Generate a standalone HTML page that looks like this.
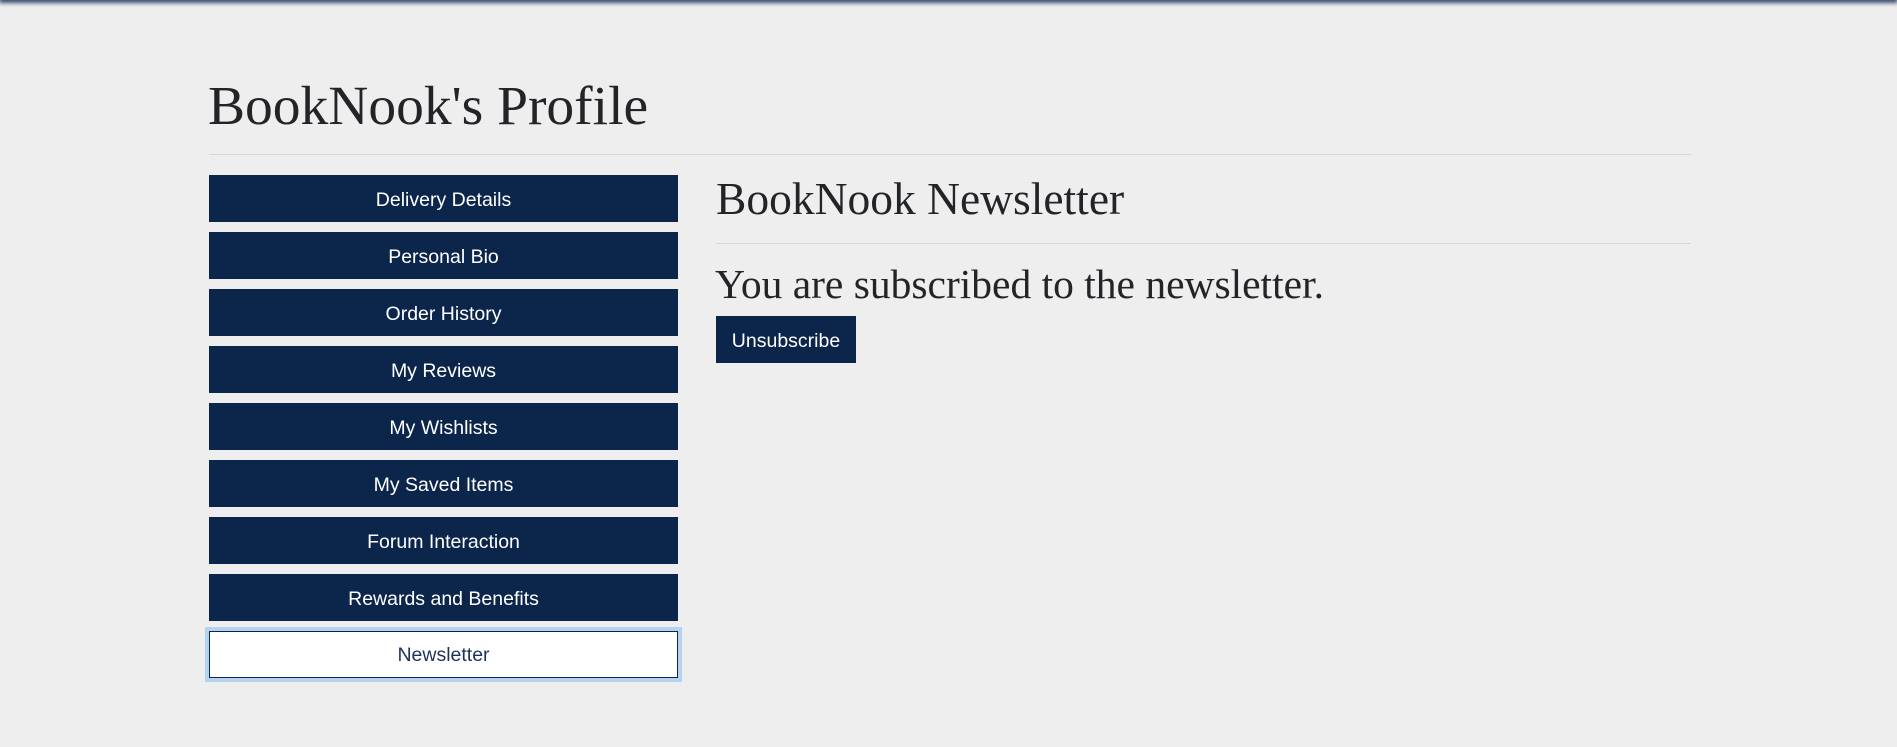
<!DOCTYPE html>
<html><head><meta charset="utf-8"><style>
html,body{margin:0;padding:0;}
body{width:1897px;height:747px;background:#eeeeee;position:relative;overflow:hidden;font-family:"Liberation Sans",sans-serif;}
.topbar{position:absolute;left:0;top:-6px;width:1897px;height:6px;box-shadow:0 2px 4px 1px #3c4a6e;background:#3c4a6e;}
h1{position:absolute;left:208px;top:75px;margin:0;font-family:"Liberation Serif",serif;font-weight:normal;font-size:55.5px;color:#222428;white-space:nowrap;}
.hr1{position:absolute;left:209px;top:154px;width:1482px;height:1px;background:#d6d6d6;}
.btn{position:absolute;left:209px;width:469px;height:47px;background:#0c254b;color:#fff;font-size:19.5px;line-height:50px;text-align:center;}
.btn.active{background:#fff;color:#1c3358;box-sizing:border-box;border:1.5px solid #0c254b;outline:4px solid #b5d2f0;line-height:46px;}
h2{position:absolute;left:716px;top:172px;margin:0;font-family:"Liberation Serif",serif;font-weight:normal;font-size:45.5px;color:#222428;white-space:nowrap;}
.hr2{position:absolute;left:716px;top:243px;width:975px;height:1px;background:#d6d6d6;}
p{position:absolute;left:715px;top:260px;margin:0;font-family:"Liberation Serif",serif;font-size:41.5px;color:#222428;white-space:nowrap;}
.unsub{position:absolute;left:716px;top:316px;width:140px;height:47px;background:#0c254b;color:#fff;font-size:19.5px;line-height:50px;text-align:center;}
</style></head><body>
<div class="topbar"></div>
<h1>BookNook's Profile</h1>
<div class="hr1"></div>
<div class="btn" style="top:175px">Delivery Details</div>
<div class="btn" style="top:232px">Personal Bio</div>
<div class="btn" style="top:289px">Order History</div>
<div class="btn" style="top:346px">My Reviews</div>
<div class="btn" style="top:403px">My Wishlists</div>
<div class="btn" style="top:460px">My Saved Items</div>
<div class="btn" style="top:517px">Forum Interaction</div>
<div class="btn" style="top:574px">Rewards and Benefits</div>
<div class="btn active" style="top:631px">Newsletter</div>
<h2>BookNook Newsletter</h2>
<div class="hr2"></div>
<p>You are subscribed to the newsletter.</p>
<div class="unsub">Unsubscribe</div>
</body></html>
